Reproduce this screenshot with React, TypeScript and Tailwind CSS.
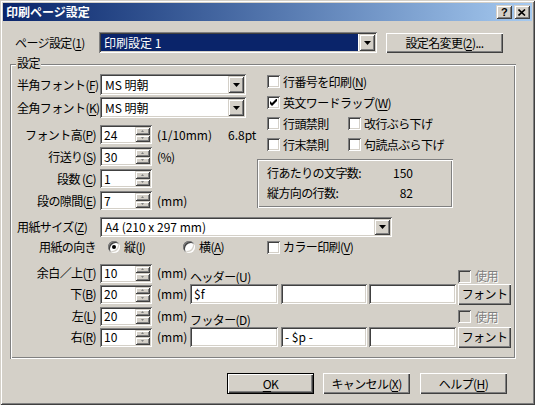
import React from "react";

const SUNKEN =
  "shadow-[inset_1px_1px_0_#808080,inset_-1px_-1px_0_#ffffff,inset_2px_2px_0_#404040,inset_-2px_-2px_0_#d4d0c8]";
const RAISED =
  "shadow-[inset_1px_1px_0_#ffffff,inset_-1px_-1px_0_#404040,inset_-2px_-2px_0_#808080]";
const RAISED_SM =
  "shadow-[inset_1px_1px_0_#d4d0c8,inset_-1px_-1px_0_#404040,inset_2px_2px_0_#ffffff,inset_-2px_-2px_0_#808080]";
const ETCHED =
  "shadow-[inset_1px_1px_0_#808080,inset_-1px_-1px_0_#ffffff,inset_2px_2px_0_#ffffff,inset_-2px_-2px_0_#808080]";

function M({ t, k, pre = "" }: { t: string; k: string; pre?: string }) {
  return (
    <>
      {t}
      {pre}(<span className="underline underline-offset-[2px]">{k}</span>)
    </>
  );
}

function DropBtn() {
  return (
    <div className={`w-[16px] h-full shrink-0 bg-[#d4d0c8] flex items-center justify-center ${RAISED_SM}`}>
      <svg width="7" height="4" viewBox="0 0 7 4">
        <path d="M0 0h7L3.5 4z" fill="#000" />
      </svg>
    </div>
  );
}

function Combo({ className, children, selected }: { className: string; children: React.ReactNode; selected?: boolean }) {
  return (
    <div className={`h-[21px] shrink-0 bg-white p-[2px] flex ${SUNKEN} ${className}`}>
      <div
        className={`flex-1 flex items-center pl-[3px] whitespace-pre tracking-normal ${
          selected ? "bg-[#0a246a] text-white mr-[1px]" : ""
        }`}
      >
        {children}
      </div>
      <DropBtn />
    </div>
  );
}

function Spin({ v }: { v: string }) {
  return (
    <div className={`w-[52px] h-[19px] shrink-0 bg-white p-[2px] flex ${SUNKEN}`}>
      <div className="flex-1 flex items-center pl-[2px] tracking-normal">{v}</div>
      <div className="w-[15px] flex flex-col">
        <div className={`flex-1 bg-[#d4d0c8] flex items-center justify-center ${RAISED_SM}`}>
          <svg width="3" height="2" viewBox="0 0 3 2">
            <path d="M1.5 0L3 2H0z" fill="#808080" />
          </svg>
        </div>
        <div className={`flex-1 bg-[#d4d0c8] flex items-center justify-center ${RAISED_SM}`}>
          <svg width="3" height="2" viewBox="0 0 3 2">
            <path d="M0 0h3L1.5 2z" fill="#808080" />
          </svg>
        </div>
      </div>
    </div>
  );
}

function Check({ checked, disabled }: { checked?: boolean; disabled?: boolean }) {
  return (
    <div
      className={`w-[13px] h-[13px] shrink-0 flex items-center justify-center ${
        disabled ? "bg-[#d4d0c8]" : "bg-white"
      } ${SUNKEN}`}
    >
      {checked && (
        <svg width="7" height="7" viewBox="0 0 7 7">
          <path d="M0 2v3l2 2 5-5V-1L2 4z" fill="#000" />
        </svg>
      )}
    </div>
  );
}

function Radio({ checked }: { checked?: boolean }) {
  return (
    <div className={`w-[12px] h-[12px] shrink-0 rounded-full bg-white flex items-center justify-center ${SUNKEN}`}>
      {checked && <div className="w-[4px] h-[4px] rounded-full bg-black" />}
    </div>
  );
}

function Field({ className, children }: { className: string; children?: React.ReactNode }) {
  return (
    <div
      className={`h-[20px] shrink-0 bg-white flex items-center pl-[4px] whitespace-pre tracking-normal ${SUNKEN} ${className}`}
    >
      {children}
    </div>
  );
}

function Btn({ className, children, def }: { className: string; children: React.ReactNode; def?: boolean }) {
  return (
    <div className={`shrink-0 ${def ? "border border-black" : ""} ${className}`}>
      <div className={`w-full h-full bg-[#d4d0c8] flex items-center justify-center whitespace-nowrap ${RAISED}`}>
        {children}
      </div>
    </div>
  );
}

function Label({ children, right }: { children: React.ReactNode; right?: boolean }) {
  return (
    <div className={`w-[83px] shrink-0 whitespace-nowrap ${right ? "text-right pr-[4px]" : ""}`}>{children}</div>
  );
}

export default function App() {
  return (
    <div className="w-[535px] h-[405px] bg-[#d4d0c8] p-[3px] text-[12px] leading-none tracking-[-0.6px] text-black font-['Noto_Sans_CJK_JP',sans-serif] shadow-[inset_1px_1px_0_#d4d0c8,inset_-1px_-1px_0_#404040,inset_2px_2px_0_#ffffff,inset_-2px_-2px_0_#808080] overflow-hidden">
      {/* title bar */}
      <div className="h-[18px] flex items-center bg-linear-to-r from-[#0a246a] to-[#a6caf0] pl-[3px] pr-[2px]">
        <span className="text-white font-bold tracking-normal">印刷ページ設定</span>
        <div className="ml-auto flex gap-[2px]">
          <div className={`w-[16px] h-[14px] bg-[#d4d0c8] flex items-center justify-center ${RAISED_SM}`}>
            <span className="font-['Liberation_Sans',sans-serif] font-bold text-[11px]">?</span>
          </div>
          <div className={`w-[16px] h-[14px] bg-[#d4d0c8] flex items-center justify-center ${RAISED_SM}`}>
            <svg width="8" height="7" viewBox="0 0 8 7">
              <path d="M0.5 0.5L7 6.5M7 0.5L0.5 6.5" stroke="#000" strokeWidth="1.6" />
            </svg>
          </div>
        </div>
      </div>

      {/* page setting row */}
      <div className="mt-[11px] h-[21px] flex items-center">
        <div className="ml-[12px] w-[84px] shrink-0 whitespace-nowrap">
          <M t="ページ設定" k="1" />
        </div>
        <Combo className="w-[278px]" selected>
          印刷設定 1
        </Combo>
        <Btn className="ml-[9px] w-[117px] h-[20px]">
          設定名変更(<span className="underline underline-offset-[2px]">2</span>)...
        </Btn>
      </div>

      {/* group box */}
      <div className={`relative mt-[11px] ml-[7px] w-[506px] h-[295px] ${ETCHED}`}>
        <div className="absolute left-[6px] top-[-7px] px-[1px] bg-[#d4d0c8]">設定</div>

        <div className="flex h-[146px]">
          {/* left column */}
          <div className="w-[247px] shrink-0 pl-[7px]">
            <div className="mt-[10px] h-[21px] flex items-center">
              <Label>
                <M t="半角フォント" k="F" />
              </Label>
              <Combo className="w-[146px]">MS 明朝</Combo>
            </div>
            <div className="mt-[2px] h-[21px] flex items-center">
              <Label>
                <M t="全角フォント" k="K" />
              </Label>
              <Combo className="w-[146px]">MS 明朝</Combo>
            </div>
            <div className="mt-[7px] h-[19px] flex items-center">
              <Label right>
                <M t="フォント高" k="P" />
              </Label>
              <Spin v="24" />
              <div className="w-[76px] shrink-0 pl-[5px] whitespace-nowrap tracking-normal">(1/10mm)</div>
              <div className="shrink-0 whitespace-nowrap tracking-normal">6.8pt</div>
            </div>
            <div className="mt-[3px] h-[19px] flex items-center">
              <Label right>
                <M t="行送り" k="S" />
              </Label>
              <Spin v="30" />
              <div className="pl-[5px] whitespace-nowrap">(%)</div>
            </div>
            <div className="mt-[3px] h-[19px] flex items-center">
              <Label right>
                <M t="段数" pre=" " k="C" />
              </Label>
              <Spin v="1" />
            </div>
            <div className="mt-[3px] h-[19px] flex items-center">
              <Label right>
                <M t="段の隙間" k="E" />
              </Label>
              <Spin v="7" />
              <div className="pl-[5px] whitespace-nowrap tracking-normal">(mm)</div>
            </div>
          </div>

          {/* right column */}
          <div className="shrink-0">
            <div className="mt-[7px] pl-[10px]">
              <div className="h-[21px] flex items-center gap-[3px]">
                <Check />
                <span className="whitespace-nowrap">
                  <M t="行番号を印刷" k="N" />
                </span>
              </div>
              <div className="h-[21px] flex items-center gap-[3px]">
                <Check checked />
                <span className="whitespace-nowrap">
                  <M t="英文ワードラップ" k="W" />
                </span>
              </div>
              <div className="h-[21px] flex items-center">
                <div className="w-[81px] flex items-center gap-[3px]">
                  <Check />
                  <span>行頭禁則</span>
                </div>
                <div className="flex items-center gap-[3px]">
                  <Check />
                  <span className="whitespace-nowrap">改行ぶら下げ</span>
                </div>
              </div>
              <div className="h-[21px] flex items-center">
                <div className="w-[81px] flex items-center gap-[3px]">
                  <Check />
                  <span>行末禁則</span>
                </div>
                <div className="flex items-center gap-[3px]">
                  <Check />
                  <span className="whitespace-nowrap">句読点ぶら下げ</span>
                </div>
              </div>
            </div>
            <div className={`mt-[4px] w-[196px] h-[49px] pt-[4px] pl-[10px] ${ETCHED}`}>
              <div className="w-[146px] h-[20px] flex items-center justify-between">
                <span>行あたりの文字数:</span>
                <span className="tracking-normal">150</span>
              </div>
              <div className="w-[146px] h-[20px] flex items-center justify-between">
                <span>縦方向の行数:</span>
                <span className="tracking-normal">82</span>
              </div>
            </div>
          </div>
        </div>

        {/* paper size */}
        <div className="mt-[7px] pl-[7px] h-[20px] flex items-center">
          <Label>
            <M t="用紙サイズ" k="Z" />
          </Label>
          <Combo className="w-[292px] !h-[20px]">A4 (210 x 297 mm)</Combo>
        </div>

        {/* orientation */}
        <div className="pl-[7px] h-[20px] flex items-center">
          <Label right>用紙の向き</Label>
          <div className="w-[83px] shrink-0 pl-[8px] flex items-center gap-[4px]">
            <Radio checked />
            <span>
              <M t="縦" k="I" />
            </span>
          </div>
          <div className="w-[84px] shrink-0 flex items-center gap-[4px]">
            <Radio />
            <span>
              <M t="横" k="A" />
            </span>
          </div>
          <div className="flex items-center gap-[3px]">
            <Check />
            <span className="whitespace-nowrap">
              <M t="カラー印刷" k="V" />
            </span>
          </div>
        </div>

        {/* margins + header/footer */}
        <div className="mt-[6px] pl-[7px] h-[20px] flex items-center">
          <Label right>
            <M t="余白／上" k="T" />
          </Label>
          <Spin v="10" />
          <div className="w-[38px] shrink-0 pl-[5px] tracking-normal">(mm)</div>
          <div className="w-[268px] shrink-0 self-end">
            <M t="ヘッダー" k="U" />
          </div>
          <div className="mt-[6px] flex items-center gap-[4px] text-[#808080] [text-shadow:1px_1px_0_#ffffff]">
            <Check disabled />
            <span>使用</span>
          </div>
        </div>
        <div className="mt-[1px] pl-[7px] h-[20px] flex items-center">
          <Label right>
            <M t="下" k="B" />
          </Label>
          <Spin v="20" />
          <div className="w-[38px] shrink-0 pl-[5px] tracking-normal">(mm)</div>
          <Field className="w-[88px]">$f</Field>
          <Field className="ml-[3px] w-[86px]" />
          <Field className="ml-[2px] w-[87px]" />
          <Btn className="ml-[2px] w-[53px] h-[21px]">フォント</Btn>
        </div>
        <div className="mt-[2px] pl-[7px] h-[20px] flex items-center">
          <Label right>
            <M t="左" k="L" />
          </Label>
          <Spin v="20" />
          <div className="w-[38px] shrink-0 pl-[5px] tracking-normal">(mm)</div>
          <div className="w-[268px] shrink-0 self-end">
            <M t="フッター" k="D" />
          </div>
          <div className="mt-[1px] flex items-center gap-[4px] text-[#808080] [text-shadow:1px_1px_0_#ffffff]">
            <Check disabled />
            <span>使用</span>
          </div>
        </div>
        <div className="mt-[1px] pl-[7px] h-[20px] flex items-center">
          <Label right>
            <M t="右" k="R" />
          </Label>
          <Spin v="10" />
          <div className="w-[38px] shrink-0 pl-[5px] tracking-normal">(mm)</div>
          <Field className="w-[88px]" />
          <Field className="ml-[3px] w-[86px]">- $p -</Field>
          <Field className="ml-[2px] w-[87px]" />
          <Btn className="ml-[2px] w-[53px] h-[21px]">フォント</Btn>
        </div>
      </div>

      {/* dialog buttons */}
      <div className="mt-[14px] flex">
        <Btn def className="ml-[224px] w-[87px] h-[21px]">
          <span className="underline underline-offset-[2px]">O</span>K
        </Btn>
        <Btn className="ml-[9px] w-[87px] h-[21px]">
          <M t="キャンセル" k="X" />
        </Btn>
        <Btn className="ml-[10px] w-[87px] h-[21px]">
          <M t="ヘルプ" k="H" />
        </Btn>
      </div>
    </div>
  );
}
